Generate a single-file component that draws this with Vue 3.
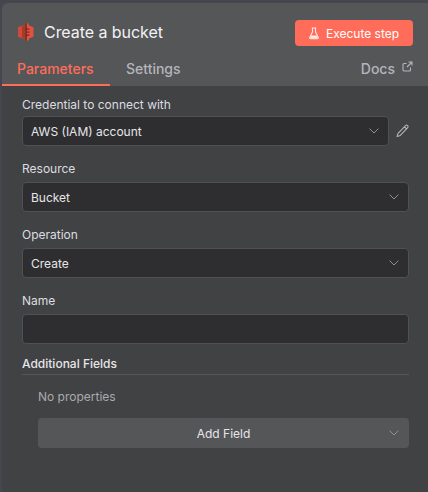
<script setup>
const fields = [
  { label: 'Resource', value: 'Bucket' },
  { label: 'Operation', value: 'Create' },
]
</script>

<template>
  <div class="page">
    <div class="panel">
      <header class="head">
        <div class="title-row">
          <svg class="logo" width="18" height="20" viewBox="0 0 18 20">
            <path fill="#cf4a39" d="M1 5l7-2v14l-7-2z" />
            <path fill="#a83a2a" d="M5 4.200l3-1.200v14l-3-1.200z" />
            <path fill="#8c3123" d="M8 2.500L10 .500v19l-2-2z" />
            <path fill="#e05243" d="M10 .500l2 2v15l-2 2z" />
            <path fill="#e05243" d="M12 3.500l4.500 1.800v9.400L12 16.500z" />
            <path fill="#7a2a1e" d="M8 6.500h4.500v1.300H8zM9.500 9.500h3v1.300h-3zM8 12.500h4.500v1.300H8z" />
          </svg>
          <span class="title">Create a bucket</span>
          <button class="exec">
            <svg width="10" height="13" viewBox="0 0 10 13" fill="none" stroke="#fff" stroke-width="1.100" stroke-linejoin="round" opacity=".85">
              <path d="M2.800 1h4.400M3.500 1v4L.8 10.300a1 1 0 0 0 .9 1.500h6.600a1 1 0 0 0 .9-1.500L6.500 5V1" />
              <path fill="#fff" stroke="none" d="M2.300 8.500h5.400l1.200 3H1.100z" />
            </svg>
            Execute step
          </button>
        </div>
        <nav class="tabs">
          <span class="tab active">Parameters</span>
          <span class="tab">Settings</span>
          <span class="docs">
            Docs
            <svg width="11" height="11" viewBox="0 0 11 11" fill="none" stroke="#b4b5bb" stroke-width="1.100">
              <path d="M8.500 6.500v2.500a1 1 0 0 1-1 1H2a1 1 0 0 1-1-1V3.500a1 1 0 0 1 1-1h2.500M6.500 1h3.500v3.500M10 1L5 6" />
            </svg>
          </span>
        </nav>
      </header>

      <main class="body">
        <div class="field cred">
          <label>Credential to connect with</label>
          <div class="row">
            <div class="select">
              <span>AWS (IAM) account</span>
              <svg class="chev" width="10" height="6" viewBox="0 0 10 6" fill="none" stroke="#8f9096" stroke-width="1"><path d="M.6.600L5 5l4.400-4.400" /></svg>
            </div>
            <svg class="pencil" width="13" height="14" viewBox="0 0 14 14" fill="none" stroke="#b9babf" stroke-width="1.100" stroke-linejoin="round">
              <path d="M10.300 1.200a1.500 1.500 0 0 1 2.300 2.100L4.600 11.800 1.200 12.900l1-3.400zM9 2.600l2.300 2.200" />
            </svg>
          </div>
        </div>

        <div v-for="f in fields" :key="f.label" class="field">
          <label>{{ f.label }}</label>
          <div class="select">
            <span>{{ f.value }}</span>
            <svg class="chev" width="10" height="6" viewBox="0 0 10 6" fill="none" stroke="#8f9096" stroke-width="1"><path d="M.6.600L5 5l4.400-4.400" /></svg>
          </div>
        </div>

        <div class="field">
          <label>Name</label>
          <div class="select"></div>
        </div>

        <section class="extra">
          <h3>Additional Fields</h3>
          <div class="extra-body">
            <p>No properties</p>
            <div class="add">
              <span>Add Field</span>
              <svg class="chev" width="10" height="6" viewBox="0 0 10 6" fill="none" stroke="#8f9096" stroke-width="1"><path d="M.6.600L5 5l4.400-4.400" /></svg>
            </div>
          </div>
        </section>
      </main>
    </div>
  </div>
</template>

<style>
html, body { margin: 0; background: #4a4854; }
</style>

<style scoped>
* { box-sizing: border-box; }
.page {
  width: 428px;
  height: 492px;
  padding: 3px 0 0 2px;
  background: #47464f;
  overflow: hidden;
  font-family: Inter, "Liberation Sans", sans-serif;
}
.panel {
  height: 489px;
  border-top-left-radius: 6px;
  background: #414244;
  display: flex;
  flex-direction: column;
}
.head {
  height: 83px;
  background: #555658;
  border-top-left-radius: 6px;
  padding-top: 17px;
}
.title-row {
  display: flex;
  align-items: center;
  height: 26px;
  padding: 0 15px 0 15px;
}
.logo { margin: 0 9px 3px 0; flex: none; }
.title {
  flex: 1;
  color: #f2f2f4;
  font-size: 16px;
  font-weight: 400;
  letter-spacing: -0.05px;
  padding-bottom: 2px;
}
.exec {
  width: 118px;
  height: 26px;
  border: none;
  border-radius: 4px;
  background: #ff6d5a;
  color: #fff;
  font: 400 12px Inter, "Liberation Sans", sans-serif;
  display: flex;
  align-items: center;
  justify-content: center;
  gap: 7px;
  padding: 0;
}
.tabs {
  display: flex;
  align-items: flex-end;
  height: 40px;
  font-size: 14px;
  font-weight: 500;
}
.tab {
  color: #b4b5bb;
  height: 31px;
  padding: 0 15px;
  line-height: 28px;
  margin-right: 1px;
  border-bottom: 2px solid transparent;
}
.tab.active {
  color: #ff6d5a;
  border-bottom-color: #ff6d5a;
  width: 108px;
}
.docs {
  margin-left: auto;
  height: 31px;
  line-height: 28px;
  padding-right: 15px;
  color: #b4b5bb;
  display: flex;
  align-items: flex-start;
  gap: 7px;
}
.docs svg { margin-top: 6px; }
.body {
  padding: 11px 19px 0 20px;
  display: flex;
  flex-direction: column;
}
.field { margin-bottom: 15px; }
.field label {
  display: block;
  color: #dcdde0;
  font-size: 12px;
  font-weight: 400;
  line-height: 15px;
  margin-bottom: 6px;
}
.field.cred label { margin-bottom: 4px; }
.row { display: flex; align-items: center; gap: 7px; }
.row .select { flex: 1; }
.pencil { flex: none; }
.select {
  height: 30px;
  background: #2e2e30;
  border: 1px solid #515155;
  border-radius: 4px;
  color: #e6e6e9;
  font-size: 12px;
  padding: 0 9px 0 8px;
  display: flex;
  align-items: center;
  justify-content: space-between;
}
.extra { margin-top: -3px; }
.extra h3 {
  margin: 0;
  color: #e6e6e9;
  font-size: 12px;
  font-weight: 500;
  line-height: 15px;
  padding: 0 0 3px;
  border-bottom: 1px solid #555659;
}
.extra-body { padding-left: 16px; }
.extra-body p {
  margin: 0;
  padding-top: 14px;
  color: #a9aaae;
  font-size: 12px;
  line-height: 15px;
}
.add {
  margin-top: 14px;
  height: 30px;
  border-radius: 4px;
  background: #555658;
  color: #e6e6e9;
  font-size: 12px;
  font-weight: 400;
  display: flex;
  align-items: center;
  justify-content: center;
  position: relative;
}
.add .chev { position: absolute; right: 10px; top: 12px; }
</style>
